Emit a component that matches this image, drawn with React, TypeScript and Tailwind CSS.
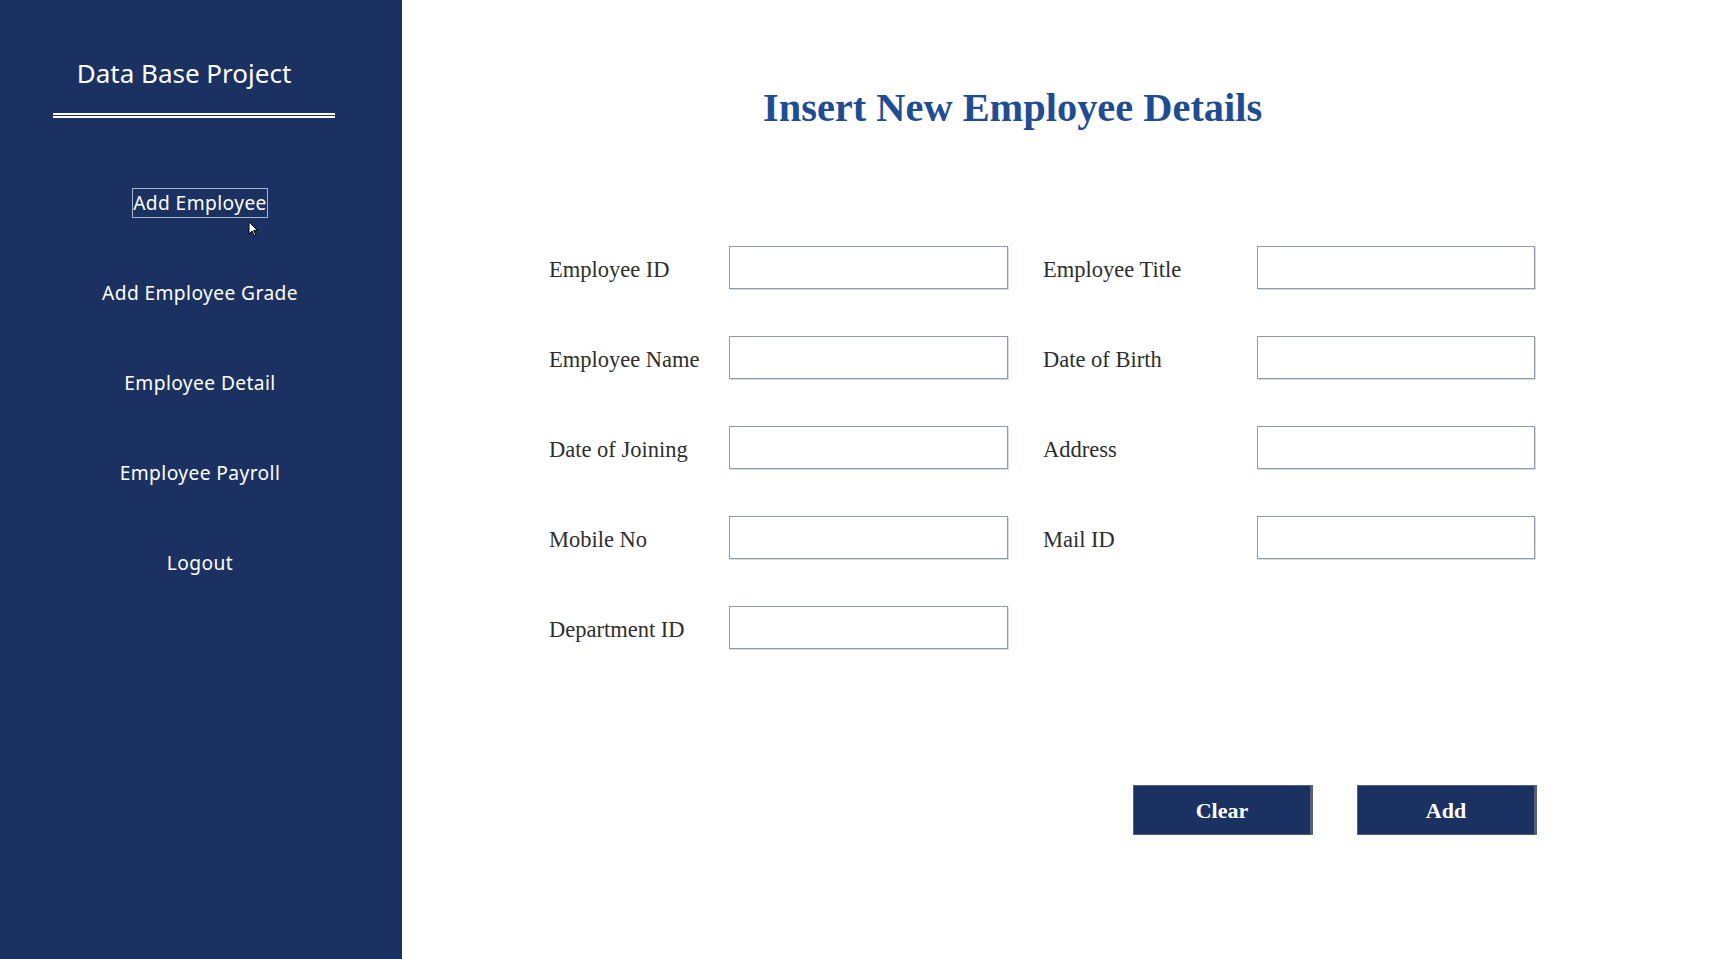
import React from "react";

const navItems = ["Add Employee", "Add Employee Grade", "Employee Detail", "Employee Payroll", "Logout"];

const fields: [string, string | null][] = [
  ["Employee ID", "Employee Title"],
  ["Employee Name", "Date of Birth"],
  ["Date of Joining", "Address"],
  ["Mobile No", "Mail ID"],
  ["Department ID", null],
];

const sans = { fontFamily: '"Segoe UI", "Noto Sans", sans-serif' };
const serif = { fontFamily: '"Times New Roman", "Liberation Serif", serif' };

const Field = ({ label, first }: { label: string; first: boolean }) => (
  <>
    <label className={`mt-[6px] text-[22.5px] leading-none text-[#2e2e2e] ${first ? "" : "pl-[35px]"}`}>{label}</label>
    <input type="text" className="h-[43px] w-full border border-[#8d9bad] bg-white shadow-[1px_1px_0_#d5dbe3] outline-none" />
  </>
);

export default function App() {
  return (
    <div className="flex h-[959px] w-full overflow-hidden bg-white">
      {/* Sidebar */}
      <aside className="relative flex w-[402px] shrink-0 flex-col items-center bg-[#1a3161] text-white" style={sans}>
        <h1 className="pt-[54px] pr-[34px] text-[26px] leading-[38px] font-normal">Data Base Project</h1>
        <div className="mt-[21px] mr-[14px] h-[5px] w-[282px] border-t-[5px] border-double border-white" />
        <nav className="mt-[70px] flex flex-col items-center gap-[60px] pr-[2px]">
          {navItems.map((item, i) => (
            <a
              key={item}
              href="#"
              className={`h-[30px] text-[19.2px] leading-[28px] tracking-[0.4px] ${i === 0 ? "border border-[#a9b6cd]" : "border border-transparent"}`}
            >
              {item}
            </a>
          ))}
        </nav>
        {/* mouse pointer */}
        <svg className="absolute left-[248px] top-[221px]" width="11" height="16" viewBox="0 0 11 16">
          <path d="M1 1 L1 13 L4 10 L6.5 15 L8 14.3 L5.6 9.4 L9.5 9.4 Z" fill="#fff" stroke="#000" strokeWidth="1" />
        </svg>
      </aside>

      {/* Main */}
      <main className="flex flex-1 flex-col pl-[147px]" style={serif}>
        <h2 className="mt-[85px] ml-[214px] text-[40.4px] leading-[46px] font-bold text-[#1f4d93]">Insert New Employee Details</h2>

        <div className="mt-[115px] grid grid-cols-[180px_279px_249px_278px] items-center gap-y-[47px]">
          {fields.map(([a, b]) => (
            <React.Fragment key={a}>
              <Field label={a} first />
              {b ? <Field label={b} first={false} /> : <><span /><span /></>}
            </React.Fragment>
          ))}
        </div>

        <div className="mt-[136px] flex w-[988px] justify-end gap-[44px]">
          {["Clear", "Add"].map((b) => (
            <button
              key={b}
              className="h-[50px] w-[180px] border border-r-[3px] border-[#52627c] bg-[#1a3161] text-[22px] font-bold text-white"
            >
              {b}
            </button>
          ))}
        </div>
      </main>
    </div>
  );
}
